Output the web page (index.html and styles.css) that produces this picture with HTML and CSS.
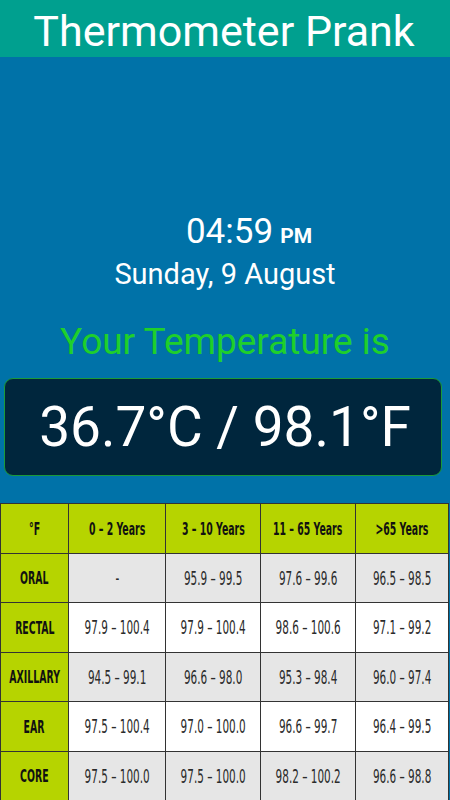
FILE: index.html
```html
<!DOCTYPE html>
<html>
<head>
    <title>Thermometer Prank</title>
    <link rel="stylesheet" href="styles.css">
</head>
<body>
    <div class="titlebar">Thermometer Prank</div>

    <div class="main">
        <div class="clock">
            <div class="time">04:59<span class="ampm">PM</span></div>
            <div class="date">Sunday, 9 August</div>
        </div>

        <div class="label">Your Temperature is</div>
        <div class="reading">36.7°C / 98.1°F</div>
    </div>

    <table class="chart">
        <colgroup>
            <col class="c0"><col class="c1"><col class="c2"><col class="c3"><col class="c4">
        </colgroup>
        <tr>
            <th><span>°F</span></th>
            <th><span>0 – 2 Years</span></th>
            <th><span>3 – 10 Years</span></th>
            <th><span>11 – 65 Years</span></th>
            <th><span>&gt;65 Years</span></th>
        </tr>
        <tr class="grey">
            <th><span>ORAL</span></th>
            <td><span>-</span></td>
            <td><span>95.9 – 99.5</span></td>
            <td><span>97.6 – 99.6</span></td>
            <td><span>96.5 – 98.5</span></td>
        </tr>
        <tr>
            <th><span>RECTAL</span></th>
            <td><span>97.9 – 100.4</span></td>
            <td><span>97.9 – 100.4</span></td>
            <td><span>98.6 – 100.6</span></td>
            <td><span>97.1 – 99.2</span></td>
        </tr>
        <tr class="grey">
            <th><span>AXILLARY</span></th>
            <td><span>94.5 – 99.1</span></td>
            <td><span>96.6 – 98.0</span></td>
            <td><span>95.3 – 98.4</span></td>
            <td><span>96.0 – 97.4</span></td>
        </tr>
        <tr>
            <th><span>EAR</span></th>
            <td><span>97.5 – 100.4</span></td>
            <td><span>97.0 – 100.0</span></td>
            <td><span>96.6 – 99.7</span></td>
            <td><span>96.4 – 99.5</span></td>
        </tr>
        <tr class="grey">
            <th><span>CORE</span></th>
            <td><span>97.5 – 100.0</span></td>
            <td><span>97.5 – 100.0</span></td>
            <td><span>98.2 – 100.2</span></td>
            <td><span>96.6 – 98.8</span></td>
        </tr>
    </table>
</body>
</html>
```

FILE: styles.css
```css
body { margin: 0; width: 450px; height: 800px; overflow: hidden; background-color: #0072a8; font-family: Roboto, "Liberation Sans", sans-serif; }

.titlebar { height: 57px; background-color: #00a08f; color: #fff; font-size: 43px; line-height: 62px; text-align: center; padding-right: 2px; }

.main { height: 446px; display: flex; flex-direction: column; align-items: center; }
.clock { margin-top: 155px; display: flex; flex-direction: column; align-items: center; color: #fff; }
.time { font-size: 35px; line-height: 40px; padding-left: 48px; }
.ampm { font-size: 21px; font-weight: bold; margin-left: 7px; }
.date { font-size: 29px; line-height: 32px; margin-top: 2px; }

.label { margin-top: 31px; font-size: 37px; line-height: 42px; color: #1fcf2b; }
.reading { margin-top: 15px; width: 438px; height: 98px; box-sizing: border-box; margin-left: -4px; background-color: #00263d; border: 1px solid #1a9a3a; border-radius: 9px; color: #fff; font-size: 55px; line-height: 96px; text-align: center; padding-left: 4px; }

table.chart { border-collapse: collapse; width: 448px; table-layout: fixed; background-color: #fff; font-family: "DejaVu Sans", sans-serif; }
col.c0 { width: 68px; }
col.c1 { width: 97px; }
col.c2 { width: 95px; }
col.c3 { width: 95px; }
col.c4 { width: 93px; }
table.chart tr { height: 49.5px; }
table.chart th, table.chart td { border: 1.5px solid #333; text-align: center; padding: 0; color: #2b2b2b; font-size: 19px; font-weight: normal; overflow: visible; }
table.chart th { background-color: #b6d400; color: #111; font-weight: bold; font-size: 18px; }
table.chart tr.grey td { background-color: #e6e6e6; }
table.chart span { display: inline-block; transform: scaleX(0.55); white-space: nowrap; margin: 0 -40px; }
table.chart th span { transform: scaleX(0.52); }
```
